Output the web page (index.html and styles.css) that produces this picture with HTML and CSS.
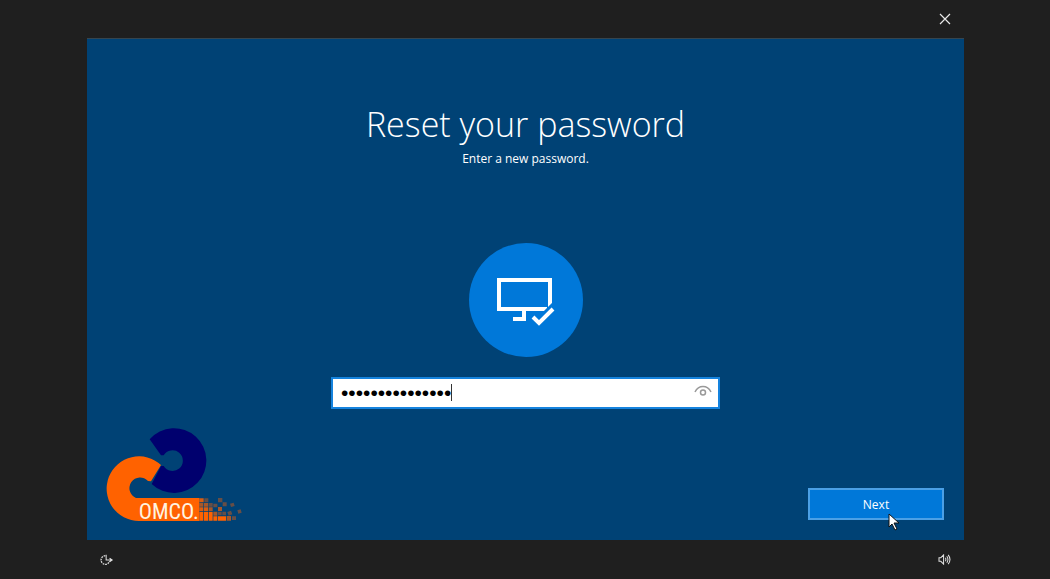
FILE: index.html
```html
<!DOCTYPE html>
<html lang="en">
  <head>
    <meta charset="utf-8">
    <title>Reset your password</title>
    <link rel="stylesheet" href="styles.css">
  </head>
  <body>
    <div class="screen">
      <header class="bar bar-top">
        <button class="icon-btn" type="button" aria-label="Close">
          <svg width="12" height="12" viewBox="0 0 12 12"><path d="M1 1l10 10M11 1L1 11" stroke="#e8e8e8" stroke-width="1.2"/></svg>
        </button>
      </header>
      <main class="panel">
        <form class="form">
          <h1 class="title">Reset your password</h1>
          <label class="subtitle" for="password">Enter a new password.</label>
          <svg class="badge" viewBox="0 0 114 114">
            <circle cx="57" cy="57" r="57" fill="#0078d9"/>
            <path d="M78 66H30V37H81V64" fill="none" stroke="#fff" stroke-width="4"/>
            <path d="M55 66v10H44" fill="none" stroke="#fff" stroke-width="4"/>
            <path d="M70 80l18-18" fill="none" stroke="#0078d9" stroke-width="10"/>
            <path d="M64 74l6 6 14-14" fill="none" stroke="#fff" stroke-width="4"/>
          </svg>
          <div class="field">
            <input class="input" id="password" type="password" value="123456789012345">
            <span class="caret"></span>
            <button class="reveal" type="button" aria-label="Show password">
              <svg width="18" height="12" viewBox="0 0 18 12" fill="none" stroke="#999" stroke-width="1.5">
                <path d="M1 7C3 3 5.500 1.500 9 1.500S15 3 17 7"/>
                <circle cx="9" cy="7.500" r="2.500"/>
              </svg>
            </button>
          </div>
        </form>
        <footer class="actions">
          <svg class="logo" viewBox="0 0 510 360" role="img" aria-label="OMCO">
            <path d="M179 73A97 97 0 1 1 185 207L213 153H221A31 31 0 1 0 221 121H213Z" fill="#00006e"/>
            <path d="M213 150A97 97 0 1 0 147 318H328V249H138A32 32 0 1 1 174 198L183 199Z" fill="#ff6200"/>
            <g fill="#ff6200">
              <path d="M328 291h12v26h-12zM342 291h12v26h-12zM356 291h12v26h-12zM370 304h12v13h-12zM384 304h24v13h-24z"/>
              <path d="M328 277h12v12h-12zM342 277h12v12h-12zM328 250h13v12h-13z" opacity=".85"/>
              <path d="M342 264h13v11h-13zM356 277h12v12h-12zM370 290h12v12h-12zM384 276h12v12h-12zM410 303h13v14h-13zM328 264h12v11h-12z" opacity=".65"/>
              <path d="M343 250h12v12h-12zM357 264h11v11h-11zM370 266h12v11h-12zM384 249h13v13h-13zM398 262h12v12h-12zM384 290h11v11h-11zM397 290h11v11h-11zM412 291l11-4 4 11-11 4zM420 266l11-3 3 10-11 3zM426 304h12v11h-12zM442 286l10-3 3 10-10 3z" opacity=".4"/>
            </g>
            <text class="logo-text" x="146" y="312">OMCO.</text>
          </svg>
          <button class="next" type="submit">Next</button>
          <svg class="cursor" width="12" height="18" viewBox="0 0 12 18"><path d="M1 1v13l3-3 3 6 2-1-3-6h5z" fill="#fff" stroke="#111" stroke-width="1"/></svg>
        </footer>
      </main>
      <div class="bar bar-bottom">
        <button class="icon-btn" type="button" aria-label="Ease of access">
          <svg width="14" height="12" viewBox="0 0 16 14" fill="none" stroke="#e0e0e0">
            <path d="M6 2a5 5 0 1 0 5 6" stroke-width="1.500" stroke-dasharray="2 1"/>
            <path d="M7 1v6h7M11 5l3 2-3 2" stroke-width="1.200"/>
          </svg>
        </button>
        <button class="icon-btn" type="button" aria-label="Volume">
          <svg width="13" height="11" viewBox="0 0 14 12" fill="none" stroke="#e0e0e0" stroke-width="1.100">
            <path d="M1 4h2l3-3v10L3 8H1z"/>
            <path d="M8 4q1 2 0 4M9.500 2.500q2.500 3.500 0 7M11 1q4 5 0 10"/>
          </svg>
        </button>
      </div>
    </div>
  </body>
</html>
```

FILE: styles.css
```css
body {
  margin: 0;
  background: #1f1f1f;
  color: #fff;
  font-family: "Open Sans", "Noto Sans", sans-serif;
}

button {
  font-family: inherit;
  color: inherit;
}

.screen {
  display: flex;
  flex-direction: column;
  min-height: 100vh;
  margin: 0 86px 0 87px;
}

.bar {
  display: flex;
  align-items: center;
  height: 38px;
  padding: 0 13px;
}

.bar-top {
  justify-content: flex-end;
}

.bar-bottom {
  justify-content: space-between;
  height: 39px;
}

.icon-btn {
  display: flex;
  padding: 0;
  border: 0;
  background: none;
}

.panel {
  flex: 1;
  display: flex;
  flex-direction: column;
  justify-content: space-between;
  border-top: 1px solid #35454f;
  background: #004275;
}

.form {
  display: flex;
  flex-direction: column;
  align-items: center;
  padding-top: 60px;
}

.title {
  margin: 0;
  font-size: 34px;
  font-weight: 300;
  line-height: 50px;
}

.subtitle {
  font-size: 12px;
  line-height: 20px;
}

.badge {
  width: 114px;
  height: 114px;
  margin: 74px 0 20px;
}

.field {
  position: relative;
  width: 389px;
  max-width: 100%;
}

.input {
  box-sizing: border-box;
  display: block;
  width: 100%;
  height: 32px;
  padding: 0 32px 0 8px;
  border: 2px solid #1583de;
  outline: 0;
  background: #fff;
  color: #000;
  font-family: "Liberation Sans", sans-serif;
  font-size: 21px;
}

/* text cursor after the last bullet */
.caret {
  position: absolute;
  top: 7px;
  left: 120px;
  width: 1px;
  height: 17px;
  background: #333;
}

.reveal {
  position: absolute;
  top: 8px;
  right: 8px;
  display: flex;
  padding: 0;
  border: 0;
  background: none;
}

.actions {
  position: relative;
  display: flex;
  align-items: flex-end;
  justify-content: space-between;
  padding: 0 20px 5px 3px;
}

.logo {
  width: 170px;
  height: 120px;
}

.logo-text {
  fill: #fff4e0;
  font-family: "Liberation Sans Narrow", "Roboto Condensed", "Liberation Sans", sans-serif;
  font-size: 66px;
}

.next {
  width: 136px;
  height: 32px;
  margin-bottom: 15px;
  padding: 0;
  border: 2px solid #4ba0e6;
  background: #0078d9;
  font-size: 12px;
}

.cursor {
  position: absolute;
  right: 64px;
  bottom: 9px;
}
```
